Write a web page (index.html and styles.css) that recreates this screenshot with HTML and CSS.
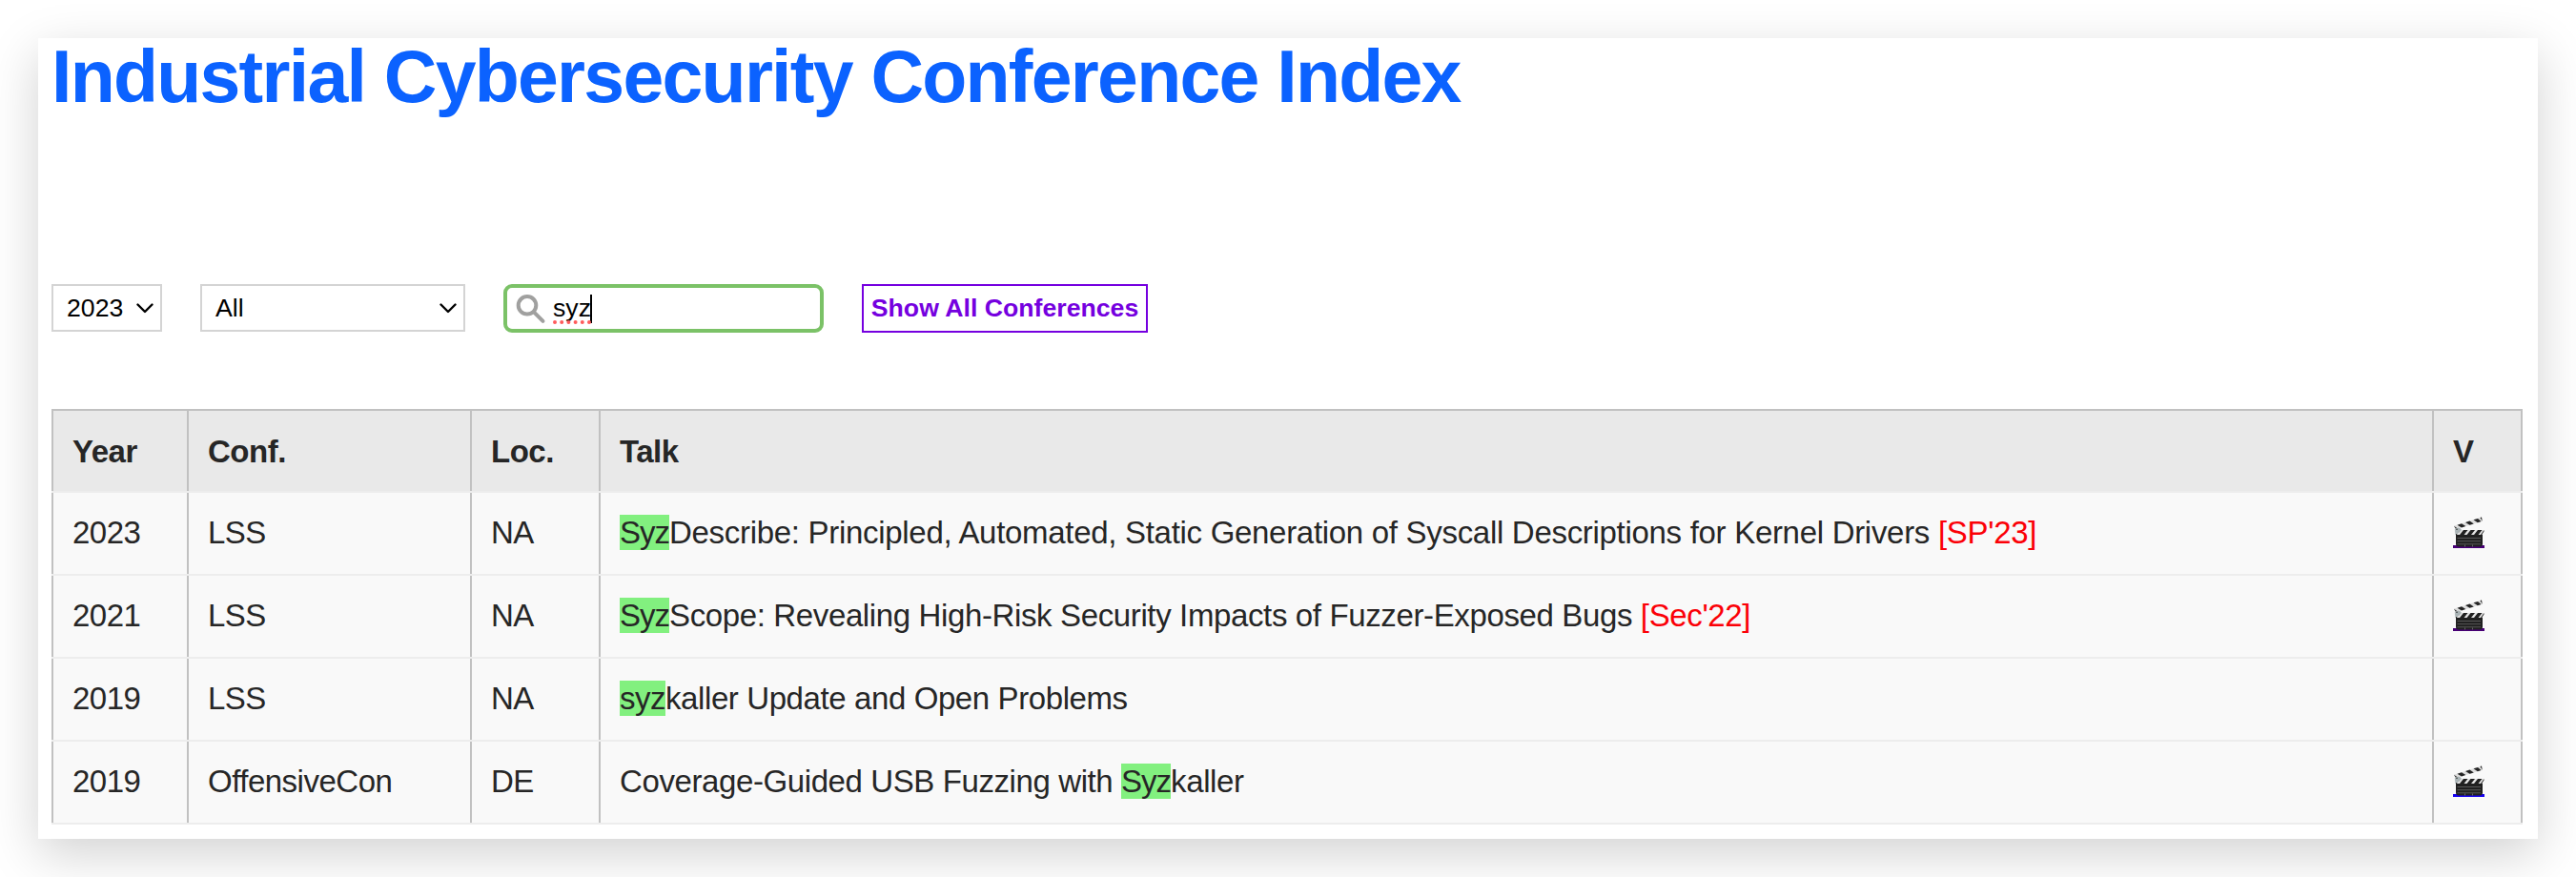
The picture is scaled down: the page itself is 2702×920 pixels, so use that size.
FILE: index.html
```html
<!DOCTYPE html>
<html lang="en">
<head>
<meta charset="utf-8">
<title>Industrial Cybersecurity Conference Index</title>
<link rel="stylesheet" href="styles.css">
</head>
<body>
<svg class="defs" width="0" height="0" aria-hidden="true">
  <symbol id="clapper" viewBox="0 0 33 33">
    <path d="M1 9.800 30 .600l.700 4.200L3 13.200z" fill="#dedede"/>
    <path d="M4.500 8.700 9 7.300l4.300 2.800-4.300 1.400zM13 6l4.500-1.400 4.300 2.800-4.300 1.400zM21.500 3.300 26 1.900l3.500 3.100-3.700 1.200zM28.500 1.100 30 .600l.7 4.200z" fill="#242424"/>
    <path d="M1 9.800 3 13.200l2-.6z" fill="#333"/>
    <path d="M1.800 12.800 6 11.500l5 4V19H2z" fill="#c3cacb"/>
    <circle cx="5.500" cy="15" r="3.200" fill="#aab4b6"/>
    <circle cx="4" cy="13.200" r=".8" fill="#333"/><circle cx="7" cy="16.600" r=".8" fill="#444"/>
    <path d="M3 18h28v10.500q0 3-3 3H6q-3 0-3-3z" fill="#202020"/>
    <path d="M9 14h23.500l-2 5H3.500z" fill="#e4e4e4"/>
    <path d="M11 14h4.500l-4 5H7zM18.500 14H23l-4 5h-4.500zM26 14h4.500l-4 5H22zM32.500 14v1.500L30 19h-1z" fill="#202020"/>
    <path d="M4.500 22.500h24.500M4.500 25.700h24.500M4.500 28.800h24.500" stroke="#606060" stroke-width=".9"/>
    <path d="M12.500 29.500v2M20.500 29.500v2" stroke="#777" stroke-width=".8"/>
  </symbol>
</svg>
<main class="page">
  <h1 class="title">Industrial Cybersecurity Conference Index</h1>
  <div class="filters">
    <div class="select select-year">2023
      <svg class="chevron" width="18" height="11" viewBox="0 0 18 11"><path d="M1.500 1.500 9 9l7.500-7.500"/></svg>
    </div>
    <div class="select select-conf">All
      <svg class="chevron" width="18" height="11" viewBox="0 0 18 11"><path d="M1.500 1.500 9 9l7.500-7.500"/></svg>
    </div>
    <div class="search">
      <svg class="magnifier" width="32" height="32" viewBox="0 0 32 32"><circle cx="12" cy="12.300" r="9.300"/><path d="m19 19.300 9.500 9.500" stroke-linecap="round"/></svg>
      <span class="query">syz<svg class="spelling" width="40" height="4" viewBox="0 0 40 4"><path d="M2 2H40"/></svg></span><span class="caret"></span>
    </div>
    <button class="show-all" type="button">Show All Conferences</button>
  </div>
  <table class="talks">
    <thead>
      <tr><th>Year</th><th>Conf.</th><th>Loc.</th><th>Talk</th><th>V</th></tr>
    </thead>
    <tbody>
      <tr class="talk-syzdescribe"><td>2023</td><td>LSS</td><td>NA</td><td class="talk"><mark>Syz</mark>Describe: Principled, Automated, Static Generation of Syscall Descriptions for Kernel Drivers <span class="paper">[SP'23]</span></td><td><a class="video visited"><svg width="33" height="33"><use href="#clapper"/></svg></a></td></tr>
      <tr class="talk-syzscope"><td>2021</td><td>LSS</td><td>NA</td><td class="talk"><mark>Syz</mark>Scope: Revealing High-Risk Security Impacts of Fuzzer-Exposed Bugs <span class="paper">[Sec'22]</span></td><td><a class="video visited"><svg width="33" height="33"><use href="#clapper"/></svg></a></td></tr>
      <tr><td>2019</td><td>LSS</td><td>NA</td><td class="talk"><mark class="lower">syz</mark>kaller Update and Open Problems</td><td></td></tr>
      <tr><td>2019</td><td>OffensiveCon</td><td>DE</td><td class="talk">Coverage-Guided USB Fuzzing with <mark>Syz</mark>kaller</td><td><a class="video"><svg width="33" height="33"><use href="#clapper"/></svg></a></td></tr>
    </tbody>
  </table>
</main>
</body>
</html>
```
FILE: styles.css
```css
* { box-sizing: border-box; }

body {
  margin: 0;
  padding: 40px;
  height: 920px;
  overflow: hidden;
  background: #fff;
  color: #262626;
  font-family: "Liberation Sans", Arial, sans-serif;
}

.defs { position: absolute; }

.page {
  height: 840px;
  padding: 0 16px 0 14px;
  background: #fff;
  box-shadow: 0 16px 50px rgba(0, 0, 0, 0.18);
}

.title {
  margin: 0;
  height: 258px;
  color: #0b62ff;
  font-size: 77px;
  line-height: 80px;
  letter-spacing: -1.74px;
  white-space: nowrap;
}

.filters {
  display: flex;
  gap: 40px;
  height: 51px;
  margin-bottom: 80px;
  font-size: 26.667px;
  line-height: 46px;
  color: #000;
}

.select {
  display: flex;
  align-items: center;
  justify-content: space-between;
  height: 50px;
  padding: 0 7px 0 14px;
  border: 2px solid #d4d4d4;
}

.select-year { width: 116px; }
.select-conf { width: 278px; }

.chevron {
  fill: none;
  stroke: #000;
  stroke-width: 2.4;
  stroke-linecap: round;
  stroke-linejoin: round;
}

.search {
  display: flex;
  align-items: center;
  width: 336px;
  height: 51px;
  padding-left: 9px;
  border: 4px solid #7bc267;
  border-radius: 9px;
}

.magnifier {
  margin-right: 7px;
  fill: none;
  stroke: #a0a09f;
  stroke-width: 4;
}

.query { position: relative; line-height: 43px; }

.spelling {
  position: absolute;
  left: 0;
  bottom: 5px;
  stroke: #ff5b5b;
  stroke-width: 4;
  stroke-linecap: round;
  stroke-dasharray: 0 7.2;
}

.caret {
  width: 2px;
  height: 30px;
  margin-left: -1px;
  background: #000;
}

.show-all {
  width: 300px;
  height: 51px;
  padding: 0 0 1px;
  border: 2px solid #7500df;
  background: #fff;
  color: #7500df;
  font: bold 26.667px/46px "Liberation Sans", Arial, sans-serif;
  white-space: nowrap;
}

.talks {
  display: block;
  border-top: 2px solid #c1c1c1;
  font-size: 33px;
  letter-spacing: -0.5px;
}

.talks thead,
.talks tbody { display: block; }

.talks tr {
  display: grid;
  grid-template-columns: 142px 297px 135px 1923px 95px;
  height: 87px;
  border-bottom: 2px solid #ededed;
  background: #f9f9f9;
}

.talks thead tr { height: 86px; background: #e9e9e9; }

.talks th,
.talks td {
  padding: 0 0 0 20px;
  border-left: 2px solid #c1c1c1;
  line-height: 84px;
  text-align: left;
  white-space: nowrap;
}

.talks th { height: 84px; line-height: 86px; }

.talks th:last-child,
.talks td:last-child { border-right: 2px solid #c1c1c1; }

.talks .talk { letter-spacing: -0.4px; }
.talks .talk-syzdescribe .talk { letter-spacing: -0.3px; }
.talks .talk-syzscope .talk { letter-spacing: -0.37px; }

mark { background: #82f07f; color: inherit; letter-spacing: -1px; }
mark.lower { letter-spacing: -0.5px; }
.paper { color: #fb0007; }

.video {
  display: block;
  width: 33px;
  height: 33px;
  margin-top: 25px;
  background: linear-gradient(#1500f0, #1500f0) bottom / 100% 3px no-repeat;
}

.video.visited { background-image: linear-gradient(#480076, #480076); }
.video svg { display: block; }
```
